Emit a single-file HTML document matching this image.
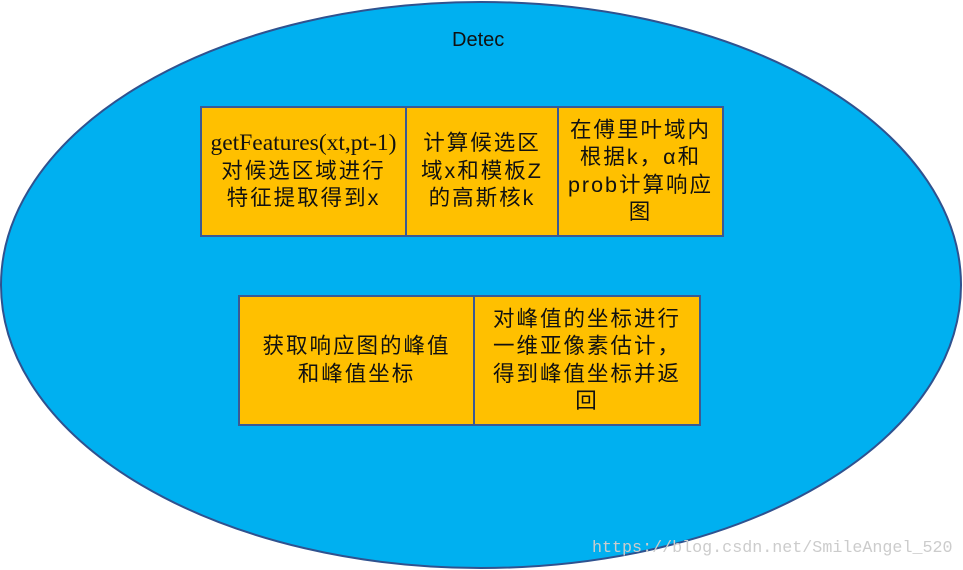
<!DOCTYPE html><html><head><meta charset="utf-8"><style>
body{margin:0;width:963px;height:570px;background:#fff;position:relative;overflow:hidden;font-family:"Liberation Sans","Noto Sans CJK SC",sans-serif}
.b{position:absolute;background:#ffc000;border:2px solid #3a5a94;box-sizing:border-box;display:flex;align-items:center;justify-content:center;text-align:center;font-size:21.5px;line-height:27.5px;color:#111;letter-spacing:2px}
.s{font-family:"Liberation Serif","Noto Serif CJK SC",serif;font-size:23.5px;letter-spacing:0}
</style></head><body>
<svg width="963" height="570" style="position:absolute;left:0;top:0"><ellipse cx="481" cy="285" rx="480" ry="283" fill="#00b0f0" stroke="#2f528f" stroke-width="2"/></svg>
<div style="position:absolute;left:452px;top:29px;font-size:20px;color:#111">Detec</div>
<div class="b" style="left:200px;top:106px;width:207px;height:131px"><div><span class="s">getFeatures(xt,pt-1)</span><br>对候选区域进行<br>特征提取得到x</div></div>
<div class="b" style="left:405px;top:106px;width:154px;height:131px"><div>计算候选区<br>域x和模板Z<br>的高斯核k</div></div>
<div class="b" style="left:557px;top:106px;width:167px;height:131px"><div>在傅里叶域内<br>根据k，α和<br>prob计算响应<br>图</div></div>
<div class="b" style="left:238px;top:295px;width:237px;height:131px"><div>获取响应图的峰值<br>和峰值坐标</div></div>
<div class="b" style="left:473px;top:295px;width:228px;height:131px"><div>对峰值的坐标进行<br>一维亚像素估计，<br>得到峰值坐标并返<br>回</div></div>
<div style="position:absolute;left:592px;top:539px;font-family:'Liberation Mono',monospace;font-size:16.7px;color:#ccc">https://blog.csdn.net/SmileAngel_520</div>
</body></html>
